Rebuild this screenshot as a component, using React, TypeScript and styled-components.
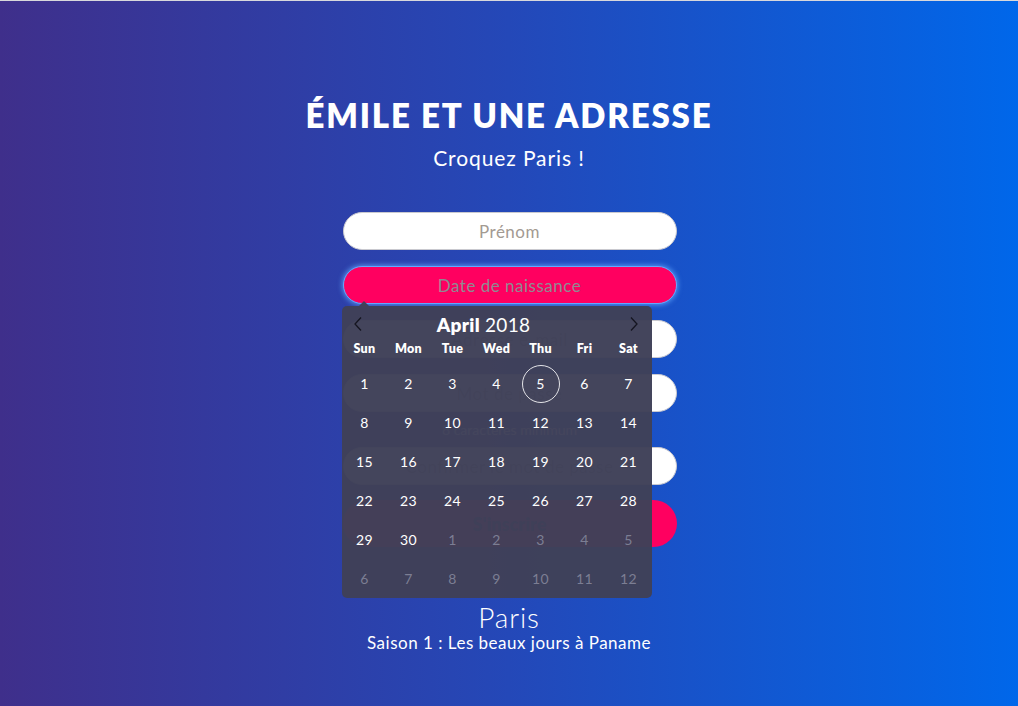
import React from 'react';
import styled, { createGlobalStyle, css } from 'styled-components';

const GlobalStyle = createGlobalStyle`
  html, body {
    margin: 0;
    padding: 0;
  }
  body {
    font-family: Lato, "Open Sans", sans-serif;
  }
  * {
    box-sizing: border-box;
  }
`;

const DAY_NAMES = ['Sun', 'Mon', 'Tue', 'Wed', 'Thu', 'Fri', 'Sat'];

type Day = { label: number; outside?: boolean; today?: boolean };

const buildWeeks = (): Day[][] => {
  const days: Day[] = [];
  for (let i = 1; i <= 30; i++) days.push({ label: i, today: i === 5 });
  for (let i = 1; i <= 12; i++) days.push({ label: i, outside: true });
  const weeks: Day[][] = [];
  for (let w = 0; w < 6; w++) weeks.push(days.slice(w * 7, w * 7 + 7));
  return weeks;
};

function Chevron({ dir }: { dir: 'left' | 'right' }) {
  return (
    <svg width="10" height="16" viewBox="0 0 10 16" fill="none">
      <path
        d={dir === 'left' ? 'M8 1.5 L2 8 L8 14.5' : 'M2 1.5 L8 8 L2 14.5'}
        stroke="#151520"
        strokeWidth="1.3"
      />
    </svg>
  );
}

function Calendar() {
  const weeks = buildWeeks();
  return (
    <CalendarBox>
      <Pointer />
      <CalHeader>
        <NavButton>
          <Chevron dir="left" />
        </NavButton>
        <MonthLabel>
          <strong>April</strong> 2018
        </MonthLabel>
        <NavButton>
          <Chevron dir="right" />
        </NavButton>
      </CalHeader>
      <WeekRow $names>
        {DAY_NAMES.map((d) => (
          <DayName key={d}>{d}</DayName>
        ))}
      </WeekRow>
      <Weeks>
        {weeks.map((week, wi) => (
          <WeekRow key={wi}>
            {week.map((day, di) => (
              <DayCell key={di} $outside={day.outside}>
                {day.today ? <Today>{day.label}</Today> : day.label}
              </DayCell>
            ))}
          </WeekRow>
        ))}
      </Weeks>
    </CalendarBox>
  );
}

export default function App() {
  return (
    <>
      <GlobalStyle />
      <Page>
        <Title>ÉMILE ET UNE ADRESSE</Title>
        <Subtitle>Croquez Paris !</Subtitle>
        <Form onSubmit={(e) => e.preventDefault()}>
          <Field placeholder="Prénom" />
          <DateWrap>
            <Field $focused placeholder="Date de naissance" />
            <Calendar />
          </DateWrap>
          <Field placeholder="Adresse e-mail" />
          <Field type="password" placeholder="Mot de passe" />
          <Hint>8 caractères minimum</Hint>
          <Field type="password" placeholder="Confirmer le mot de passe" />
          <Submit type="submit">S'inscrire</Submit>
        </Form>
        <City>Paris</City>
        <Season>Saison 1 : Les beaux jours à Paname</Season>
      </Page>
    </>
  );
}

const Page = styled.div`
  min-height: 100vh;
  border-top: 1px solid #d8d8dc;
  background: linear-gradient(to right, #3f2f8b 0%, #2448b8 50%, #0067ea 100%);
  display: flex;
  flex-direction: column;
  align-items: center;
  padding-top: 94px;
  color: #fff;
`;

const Title = styled.h1`
  margin: 0;
  font-size: 33px;
  line-height: 40px;
  font-weight: 800;
  letter-spacing: 1.8px;
`;

const Subtitle = styled.p`
  margin: 11px 0 0;
  font-size: 21px;
  line-height: 24px;
  font-weight: 400;
  letter-spacing: 0.9px;
`;

const Form = styled.form`
  margin-top: 42px;
  width: 334px;
  margin-left: 1px;
  display: flex;
  flex-direction: column;
`;

const Field = styled.input<{ $focused?: boolean }>`
  width: 100%;
  height: 38px;
  border-radius: 19px;
  border: 1px solid #c9c9cf;
  background: #fff;
  text-align: center;
  font-family: inherit;
  font-size: 17px;
  letter-spacing: 0.5px;
  color: #333;
  outline: none;
  margin-bottom: 16px;
  &::placeholder {
    color: #a39a92;
  }
  ${({ $focused }) =>
    $focused &&
    css`
      background: #ff0060;
      border-color: #63a8ff;
      box-shadow: 0 0 5px 1px rgba(100, 170, 255, 0.75);
      &::placeholder {
        color: #8f8a92;
      }
    `}
`;

const DateWrap = styled.div`
  position: relative;
`;

const Hint = styled.div`
  margin-top: -16px;
  height: 35px;
  display: flex;
  align-items: center;
  justify-content: center;
  font-size: 14px;
  color: #fff;
`;

const Submit = styled.button`
  height: 47px;
  border-radius: 24px;
  border: none;
  background: #ff0060;
  color: #2b2b4a;
  font-family: inherit;
  font-weight: 800;
  font-size: 18px;
  margin-top: -1px;
`;

const City = styled.div`
  margin-top: 54px;
  font-size: 28px;
  line-height: 32px;
  font-weight: 300;
  letter-spacing: 0.8px;
`;

const Season = styled.div`
  font-size: 17px;
  line-height: 20px;
  letter-spacing: 0.5px;
`;

const CalendarBox = styled.div`
  position: absolute;
  top: 40px;
  left: -1px;
  width: 310px;
  padding: 6px 1px 0;
  height: 292px;
  border-radius: 5px;
  background: rgba(63, 65, 88, 0.975);
  z-index: 10;
`;

const Pointer = styled.div`
  position: absolute;
  top: -5px;
  left: 17px;
  width: 0;
  height: 0;
  border-left: 5px solid transparent;
  border-right: 5px solid transparent;
  border-bottom: 5px solid rgba(63, 65, 88, 0.975);
`;

const CalHeader = styled.div`
  height: 24px;
  display: flex;
  align-items: center;
  padding-right: 2px;
`;

const NavButton = styled.div`
  width: 30px;
  display: flex;
  justify-content: center;
`;

const MonthLabel = styled.div`
  flex: 1;
  text-align: center;
  font-size: 19px;
  padding-right: 24px;
  font-weight: 400;
  letter-spacing: 0.3px;
  strong {
    font-weight: 800;
  }
`;

const Weeks = styled.div`
  margin-top: 4px;
`;

const WeekRow = styled.div<{ $names?: boolean }>`
  display: grid;
  grid-template-columns: repeat(7, 44px);
  height: ${({ $names }) => ($names ? '24px' : '39px')};
  align-items: center;
`;

const DayName = styled.div`
  text-align: center;
  font-size: 12.5px;
  font-weight: 800;
  letter-spacing: 0.3px;
`;

const DayCell = styled.div<{ $outside?: boolean }>`
  display: flex;
  align-items: center;
  justify-content: center;
  height: 39px;
  font-size: 14px;
  letter-spacing: 0.3px;
  color: ${({ $outside }) => ($outside ? '#7c7e93' : '#fff')};
`;

const Today = styled.span`
  width: 38px;
  height: 38px;
  border-radius: 50%;
  border: 1px solid rgba(255, 255, 255, 0.85);
  display: flex;
  align-items: center;
  justify-content: center;
`;
